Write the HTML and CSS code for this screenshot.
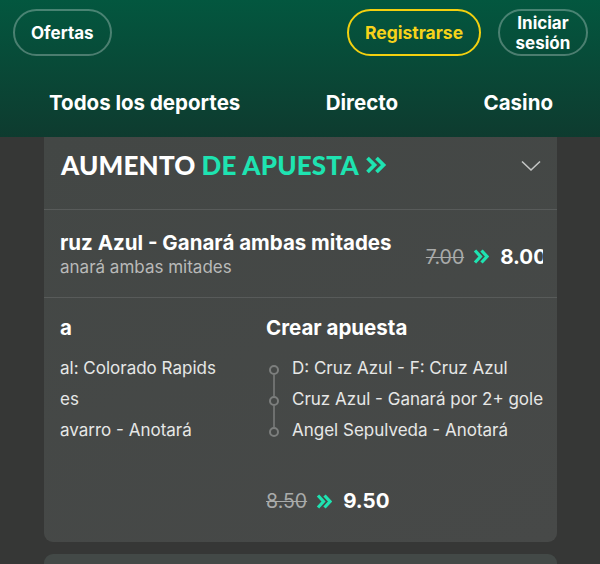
FILE: index.html
```html
<!DOCTYPE html>
<html lang="es">

<head>
    <meta charset="UTF-8">
    <meta name="viewport" content="width=device-width, initial-scale=1.0">
    <title>Aumento de apuesta</title>
    <link rel="stylesheet" href="styles.css">
</head>

<body>
    <header class="top">
        <div class="top-bar">
            <a class="pill">Ofertas</a>
            <div class="top-actions">
                <a class="pill pill-yellow">Registrarse</a>
                <a class="pill pill-login">Iniciar<br>sesión</a>
            </div>
        </div>
        <nav class="nav">
            <a>Todos los deportes</a>
            <a>Directo</a>
            <a>Casino</a>
        </nav>
    </header>

    <main class="content">
        <section class="card">
            <div class="card-head">
                <h2 class="boost-title">AUMENTO <span>DE APUESTA</span>
                    <svg class="boost-arrows" width="22" height="18" viewBox="0 0 22 18">
                        <path d="M2.5 2 L9.5 9 L2.5 16 M11.5 2 L18.5 9 L11.5 16" fill="none" stroke="#1ee3b1" stroke-width="3.8" />
                    </svg>
                </h2>
                <svg class="toggle" width="20" height="12" viewBox="0 0 20 12">
                    <path d="M1 1.5 L10 10 L19 1.5" fill="none" stroke="#c4c6c5" stroke-width="1.6" />
                </svg>
            </div>

            <div class="scroller">
                <div class="track">
                    <div class="bet-row">
                        <div class="bet-text">
                            <p class="bet-name">ruz Azul - Ganará ambas mitades</p>
                            <p class="bet-sub">anará ambas mitades</p>
                        </div>
                        <div class="odds">
                            <s>7.00</s>
                            <svg width="16" height="15" viewBox="0 0 16 15">
                                <path d="M2 1.5 L7.5 7.5 L2 13.5 M8.5 1.5 L14 7.5 L8.5 13.5" fill="none" stroke="#1ee3b1" stroke-width="3.2" />
                            </svg>
                            <b>8.00</b>
                        </div>
                    </div>
                </div>
            </div>

            <div class="scroller scroller-last">
                <div class="track">
                    <div class="combos">
                        <div class="combo combo-prev">
                            <h3>a</h3>
                            <ul class="legs">
                                <li>al: Colorado Rapids</li>
                                <li>es</li>
                                <li>avarro - Anotará</li>
                            </ul>
                        </div>
                        <div class="combo">
                            <h3>Crear apuesta</h3>
                            <ul class="legs legs-line">
                                <li>D: Cruz Azul - F: Cruz Azul</li>
                                <li>Cruz Azul - Ganará por 2+ goles</li>
                                <li>Angel Sepulveda - Anotará</li>
                            </ul>
                            <div class="odds odds-combo">
                                <s>8.50</s>
                                <svg width="16" height="15" viewBox="0 0 16 15">
                                    <path d="M2 1.5 L7.5 7.5 L2 13.5 M8.5 1.5 L14 7.5 L8.5 13.5" fill="none" stroke="#1ee3b1" stroke-width="3.2" />
                                </svg>
                                <b>9.50</b>
                            </div>
                        </div>
                    </div>
                </div>
            </div>
        </section>

        <section class="card card-next"></section>
    </main>
</body>

</html>
```

FILE: styles.css
```css
body {
    margin: 0;
    background-color: #363736;
    font-family: Inter, "Noto Sans", sans-serif;
    color: white;
    height: 564px;
    overflow: hidden;
}

p,
h2,
h3,
ul {
    margin: 0;
    padding: 0;
}

/* header */

.top {
    height: 137px;
    box-sizing: border-box;
    background: linear-gradient(#03573f, #0e3b2f);
    padding-top: 9px;
}

.top-bar {
    display: flex;
    justify-content: space-between;
    padding: 0 12px 0 13px;
}

.top-actions {
    display: flex;
    gap: 17px;
}

.pill {
    display: flex;
    align-items: center;
    justify-content: center;
    height: 47px;
    box-sizing: border-box;
    padding: 0 16px;
    border: 2px solid rgba(255, 255, 255, 0.28);
    border-radius: 24px;
    font-size: 17px;
    font-weight: 700;
    color: white;
}

.pill-yellow {
    width: 134px;
    border-color: #f3d00f;
    color: #f6d31a;
    font-size: 17.5px;
}

.pill-login {
    width: 90px;
    padding: 0;
    text-align: center;
    line-height: 20px;
}

.nav {
    display: flex;
    justify-content: space-between;
    padding: 0 47px 0 49px;
    margin-top: 32px;
    font-size: 20.5px;
    font-weight: 700;
    line-height: 30px;
}

/* cards */

.content {
    padding: 0 43px 0 44px;
}

.card {
    background: linear-gradient(160deg, #434745, #474948);
    border-radius: 0 0 9px 9px;
}

.card-next {
    margin-top: 12px;
    height: 11px;
    border-radius: 9px 9px 0 0;
    background: #434947;
}

.card-head {
    display: flex;
    align-items: flex-start;
    justify-content: space-between;
    height: 73px;
    box-sizing: border-box;
    padding: 14px 16px 0 17px;
    border-bottom: 1px solid #585b5a;
}

.boost-title {
    display: flex;
    align-items: center;
    gap: 6px;
    font-family: Lato, sans-serif;
    font-weight: 900;
    font-size: 26px;
    line-height: 28px;
    letter-spacing: 0.2px;
}

.boost-title span {
    color: #1ee3b1;
}

.toggle {
    margin-top: 9px;
}

.scroller {
    border-bottom: 1px solid #585b5a;
    padding: 0 14px;
}

.scroller-last {
    border-bottom: none;
}

.track {
    overflow: hidden;
}

.bet-row {
    display: flex;
    align-items: center;
    justify-content: space-between;
    margin-right: -4px;
    padding: 20px 0 18px 2px;
}

.bet-name {
    font-size: 20.5px;
    font-weight: 700;
    line-height: 25px;
}

.bet-sub {
    font-size: 17px;
    line-height: 24px;
    color: #b9bab9;
}

.odds {
    display: flex;
    align-items: center;
    gap: 9px;
    white-space: nowrap;
    margin-top: 4px;
}

.odds s {
    font-size: 19.5px;
    color: #a9abaa;
}

.odds b {
    margin-left: 2px;
    font-size: 20.5px;
    font-weight: 700;
}

/* combos */

.combos {
    display: flex;
    padding: 18px 0 29px;
}

.combo {
    flex: none;
    white-space: nowrap;
}

.combo-prev {
    width: 206px;
    padding-left: 2px;
}

.combo h3 {
    font-size: 20.5px;
    font-weight: 700;
    line-height: 24px;
}

.legs {
    list-style: none;
    margin-top: 13px;
}

.legs li {
    font-size: 17px;
    line-height: 31px;
    color: #e6e7e6;
}

.legs-line li {
    position: relative;
    padding-left: 26px;
}

.legs-line li::before {
    content: "";
    position: absolute;
    left: 3px;
    top: 11.5px;
    width: 6px;
    height: 6px;
    border: 2px solid #7c7e7d;
    border-radius: 50%;
}

.legs-line li:not(:last-child)::after {
    content: "";
    position: absolute;
    left: 7px;
    top: 21.5px;
    width: 2px;
    height: 21px;
    background-color: #6e706f;
}

.odds-combo {
    margin-top: 43px;
    line-height: 24px;
}
```
